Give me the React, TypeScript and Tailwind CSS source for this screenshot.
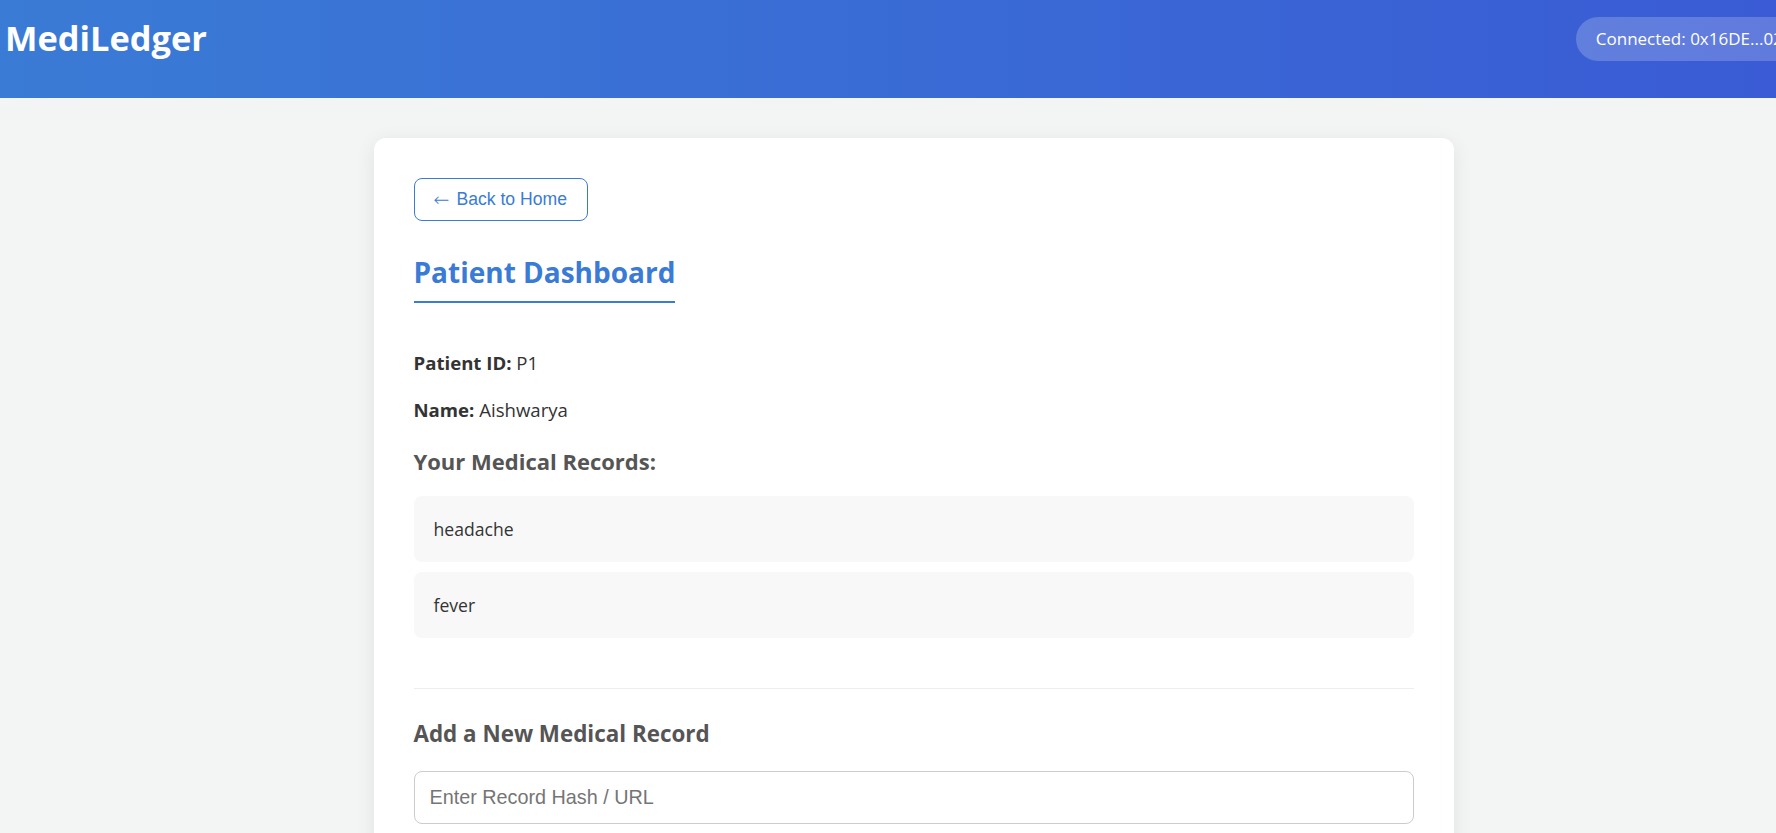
const records = ["headache", "fever"];

const App = () => {
  return (
    <div className="h-screen w-full overflow-hidden bg-[#f3f5f4] font-['Open_Sans',sans-serif] text-[#333]">
      <div className="w-[1827px]">
        <header className="flex h-[98px] items-center justify-between bg-gradient-to-r from-[#3a7bd5] to-[#3a5ad5] px-[5px] pb-[21px] text-white">
          <h1 className="text-[34.4px] font-bold leading-none">MediLedger</h1>
          <div className="flex h-[44px] items-center rounded-full bg-white/20 px-[20px] text-[17px]">
            Connected: 0x16DE...02a7
          </div>
        </header>

        <main className="pt-[40px]">
          <div className="mx-auto w-[1080px] rounded-[12px] bg-white px-[40px] pt-[40px] pb-[40px] shadow-[0_4px_20px_rgba(0,0,0,0.08)]">
            <button className="flex h-[43px] items-center gap-[7px] rounded-[8px] border border-[#3a7bd5] pl-[19px] pr-[20px] font-['Liberation_Sans',sans-serif] text-[17.6px] text-[#3a7bd5]">
              <span className="font-['DejaVu_Sans',sans-serif] text-[19px] font-light leading-none">←</span>
              <span>Back to Home</span>
            </button>

            <h2 className="mt-[34px] inline-block border-b-2 border-[#3a7bd5] pb-[12px] text-[28px] font-bold leading-[34px] text-[#3a7bd5]">
              Patient Dashboard
            </h2>

            <p className="mt-[47px] text-[18.6px] leading-[26px]">
              <strong>Patient ID:</strong> P1
            </p>
            <p className="mt-[21px] text-[18.6px] leading-[26px]">
              <strong>Name:</strong> Aishwarya
            </p>

            <h3 className="mt-[23px] text-[22px] font-bold leading-[30px] text-[#555]">Your Medical Records:</h3>
            <ul className="mt-[20px] flex flex-col gap-[10px]">
              {records.map((r) => (
                <li key={r} className="flex h-[66px] items-center rounded-[8px] bg-[#f8f8f8] px-[20px] text-[17.6px]">
                  {r}
                </li>
              ))}
            </ul>

            <hr className="mt-[50px] border-t border-[#eee]" />

            <h3 className="mt-[30px] text-[22.4px] font-bold leading-[30px] text-[#555]">Add a New Medical Record</h3>
            <input
              type="text"
              placeholder="Enter Record Hash / URL"
              className="mt-[22px] h-[53px] w-full rounded-[8px] border border-[#ccc] px-[15px] font-['Liberation_Sans',sans-serif] text-[19.8px] placeholder:text-[#757575]"
            />
            <button className="mt-[16px] h-[50px] w-[200px] rounded-[8px] bg-[#3a7bd5] text-white">Add Record</button>
          </div>
        </main>
      </div>
    </div>
  );
};

export default App;
